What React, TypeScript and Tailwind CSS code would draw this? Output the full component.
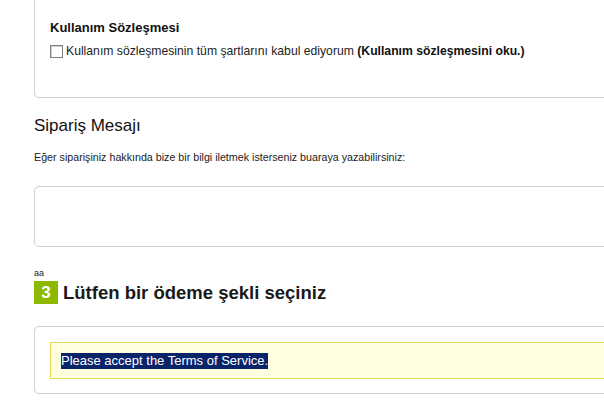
export default function App() {
  return (
    <div className="w-[604px] h-[403px] overflow-hidden bg-white pl-[34px] font-['Liberation_Sans',Arial,sans-serif] text-[#222]">
      <div className="w-[600px] -mt-[10px] h-[108px] border border-[#cfcfcf] rounded-[5px] pl-[15px] pt-[29px]">
        <h3 className="text-[13px] font-bold leading-[16px] text-[#111]">Kullanım Sözleşmesi</h3>
        <label className="mt-[8px] flex items-center text-[12.2px] leading-[15px] text-[#222]">
          <span className="w-[13px] h-[13px] border border-[#808080] bg-white shadow-[inset_1px_1px_0_#d4d0c8] mr-[3px] shrink-0" />
          <span>
            Kullanım sözleşmesinin tüm şartlarını kabul ediyorum{" "}
            <b className="font-bold text-[#111]">(Kullanım sözleşmesini oku.)</b>
          </span>
        </label>
      </div>

      <h2 className="mt-[18px] text-[17px] leading-[20px] text-[#111]">Sipariş Mesajı</h2>
      <p className="mt-[15px] text-[10.7px] leading-[13px] text-[#222]">
        Eğer siparişiniz hakkında bize bir bilgi iletmek isterseniz buaraya yazabilirsiniz:
      </p>
      <div className="mt-[22px] w-[600px] h-[61px] border border-[#cfcfcf] rounded-[5px]" />

      <div className="mt-[21px] text-[9px] leading-[10px] text-[#222]">aa</div>
      <div className="mt-[3px] flex items-center gap-[5px]">
        <span className="w-[24px] h-[23px] bg-[#8cb800] text-white text-[17px] font-bold flex items-center justify-center">3</span>
        <h1 className="text-[18.5px] font-bold leading-[22px] text-[#1a1a1a]">Lütfen bir ödeme şekli seçiniz</h1>
      </div>

      <div className="mt-[22px] w-[600px] h-[68px] border border-[#cfcfcf] rounded-[5px] pl-[15px] pt-[15px]">
        <div className="h-[37px] border border-[#e2d95a] bg-[#ffffe0] pl-[10px] flex items-center">
          <span className="bg-[#0a246a] text-white text-[13px] leading-[16px]">Please accept the Terms of Service.</span>
        </div>
      </div>
    </div>
  );
}
